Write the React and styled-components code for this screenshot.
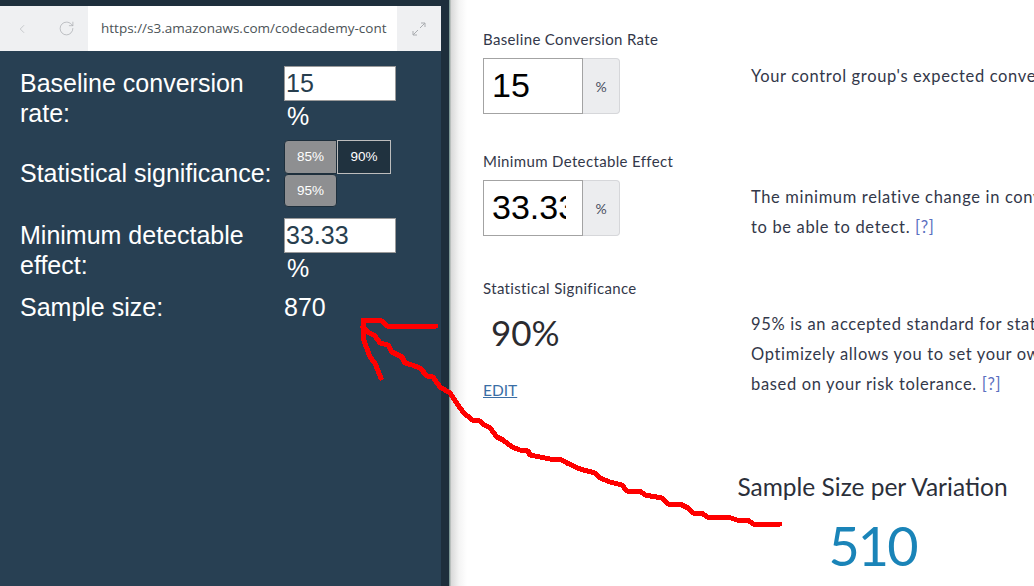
import React from 'react';
import styled, { createGlobalStyle } from 'styled-components';
import { ChevronLeft, RotateCw } from 'lucide-react';

const GlobalStyle = createGlobalStyle`
  html, body {
    margin: 0;
    padding: 0;
    background: #ffffff;
  }
  * {
    box-sizing: border-box;
  }
`;

const mainLine =
  '780,524 753,524 748,520 737,520 728,517 707,517 702,513 693,513 688,508 680,504 668,504 662,498 645,495 640,491 627,491 622,485 610,482 600,478 595,473 580,469 567,463 560,459 550,459 530,455 528,451 520,450 512,447 503,440 497,437 490,428 483,424 480,421 472,420 463,412 458,405 450,393 440,387 433,377 427,376 420,368 412,365 405,363 402,357 392,352 388,345 380,343 375,336 368,332 363,327';
const headLine =
  '436,326 387,326 382,321 363,320 363,338 370,357 375,363 381,378';

const App = () => {
  return (
    <Page>
      <GlobalStyle />
      <Preview>
        <Toolbar>
          <NavButton>
            <ChevronLeft size={14} strokeWidth={1} />
          </NavButton>
          <NavButton>
            <RotateCw size={17} strokeWidth={1} />
          </NavButton>
          <UrlBox>https://s3.amazonaws.com/codecademy-content/</UrlBox>
          <ExpandButton>
            <svg width="14" height="14" viewBox="0 0 14 14" fill="none" stroke="#a9acb0" strokeWidth="1">
              <path d="M8 6 L13 1 M9 1 H13 V5 M6 8 L1 13 M1 9 V13 H5" />
            </svg>
          </ExpandButton>
        </Toolbar>
        <Calculator>
          <CalcLabel>Baseline conversion rate:</CalcLabel>
          <CalcField>
            <CalcInput defaultValue="15" />
            <Unit>%</Unit>
          </CalcField>
          <CalcLabel $lift={2}>Statistical significance:</CalcLabel>
          <ButtonSet>
            <Choice $first>85%</Choice>
            <Choice $active>90%</Choice>
            <Choice $wrapped>95%</Choice>
          </ButtonSet>
          <CalcLabel>Minimum detectable effect:</CalcLabel>
          <CalcField>
            <CalcInput defaultValue="33.33" />
            <Unit>%</Unit>
          </CalcField>
          <CalcLabel $lift={4}>Sample size:</CalcLabel>
          <CalcLabel $lift={4}>870</CalcLabel>
        </Calculator>
      </Preview>
      <Divider />
      <Article>
        <Setting $height={122}>
          <FieldColumn>
            <FieldLabel>Baseline Conversion Rate</FieldLabel>
            <InputGroup>
              <BigInput defaultValue="15" />
              <Addon>%</Addon>
            </InputGroup>
          </FieldColumn>
          <Description $top={31}>
            Your control group's expected conversion rate. [?]
          </Description>
        </Setting>
        <Setting $height={127}>
          <FieldColumn>
            <FieldLabel>Minimum Detectable Effect</FieldLabel>
            <InputGroup>
              <BigInput defaultValue="33.33" />
              <Addon>%</Addon>
            </InputGroup>
          </FieldColumn>
          <Description $top={30}>
            The minimum relative change in conversion rate you would like
            <br />
            to be able to detect. <Help>[?]</Help>
          </Description>
        </Setting>
        <Setting $height={128}>
          <FieldColumn>
            <FieldLabel>Statistical Significance</FieldLabel>
            <BigValue>90%</BigValue>
            <EditLink>EDIT</EditLink>
          </FieldColumn>
          <Description $top={30}>
            95% is an accepted standard for statistical significance, although
            <br />
            Optimizely allows you to set your own threshold for significance
            <br />
            based on your risk tolerance. <Help>[?]</Help>
          </Description>
        </Setting>
        <Result>
          <ResultTitle>Sample Size per Variation</ResultTitle>
          <ResultValue>510</ResultValue>
        </Result>
      </Article>
      <Scribble viewBox="0 0 1034 586" fill="none" stroke="#fe0000" strokeWidth="5" strokeLinejoin="round" strokeLinecap="round" shapeRendering="crispEdges">
        <polyline points={mainLine} />
        <polyline points={headLine} />
      </Scribble>
    </Page>
  );
};

export default App;

const Page = styled.div`
  position: relative;
  display: flex;
  width: 1034px;
  height: 586px;
  overflow: hidden;
  background: #ffffff;
`;
const Preview = styled.div`
  width: 441px;
  flex-shrink: 0;
  padding-top: 6px;
  background: #284053;
  box-shadow: inset 0 6px 0 #1e2f3c;
  font-family: 'Liberation Sans', Arial, sans-serif;
`;
const Toolbar = styled.div`
  display: flex;
  align-items: center;
  height: 45px;
  background: #eff0f2;
`;
const NavButton = styled.div`
  display: flex;
  justify-content: center;
  align-items: center;
  width: 44px;
  height: 100%;
  color: #a9acb0;
`;
const UrlBox = styled.div`
  width: 309px;
  height: 100%;
  padding-left: 13px;
  overflow: hidden;
  border-right: 10px solid #ffffff;
  background: #ffffff;
  color: #4c5357;
  font-family: 'Open Sans', sans-serif;
  font-size: 13.5px;
  line-height: 45px;
  white-space: nowrap;
`;
const ExpandButton = styled.div`
  display: flex;
  flex: 1;
  justify-content: center;
  align-items: center;
`;
const Calculator = styled.div`
  display: grid;
  grid-template-columns: 264px 112px;
  row-gap: 10px;
  align-items: center;
  padding: 15px 0 0 20px;
  color: #ffffff;
  font-size: 25px;
  line-height: 30px;
`;
const CalcLabel = styled.div`
  padding-bottom: ${(p) => p.$lift || 0}px;
`;
const CalcField = styled.div`
  height: 64px;
`;
const CalcInput = styled.input`
  display: block;
  width: 112px;
  height: 35px;
  padding: 0 1px;
  border: 1px solid #9a9a9a;
  border-radius: 0;
  outline: none;
  background: #ffffff;
  color: #273e4e;
  font-family: 'Liberation Sans', Arial, sans-serif;
  font-size: 25px;
`;
const Unit = styled.div`
  padding-left: 3px;
`;
const ButtonSet = styled.div`
  display: flex;
  flex-wrap: wrap;
  align-content: flex-start;
  width: 112px;
  height: 68px;
`;
const Choice = styled.div`
  display: flex;
  justify-content: center;
  align-items: center;
  width: ${(p) => (p.$active ? '54px' : '53px')};
  height: ${(p) => (p.$wrapped ? '33px' : '34px')};
  border: 1px solid ${(p) => (p.$active ? '#bdbdbd' : '#1e2f3c')};
  border-radius: ${(p) => (p.$first ? '4px 0 0 4px' : p.$wrapped ? '4px' : '0')};
  background: ${(p) => (p.$active ? '#20323f' : '#8e8f91')};
  color: #ffffff;
  font-size: 13.5px;
  line-height: 1;
`;
const Divider = styled.div`
  width: 10px;
  flex-shrink: 0;
  background: linear-gradient(to right, #1e2f3c 0, #1e2f3c 8px, #7f9a96 8px, #7f9a96 9px, #b9bfbd 9px);
`;
const Article = styled.div`
  flex: 1;
  min-width: 0;
  padding: 30px 0 0 32px;
  overflow: hidden;
  background: linear-gradient(to right, #d9d9d9 0, #f4f4f4 8px, #ffffff 16px);
  color: #2b2f3a;
  font-family: Lato, 'Open Sans', sans-serif;
`;
const Setting = styled.div`
  display: flex;
  height: ${(p) => p.$height}px;
`;
const FieldColumn = styled.div`
  display: flex;
  flex-direction: column;
  align-items: flex-start;
  width: 268px;
  flex-shrink: 0;
`;
const FieldLabel = styled.div`
  height: 28px;
  color: #33384a;
  font-size: 15px;
  line-height: 18px;
  letter-spacing: 0.35px;
`;
const InputGroup = styled.div`
  display: flex;
  height: 56px;
`;
const BigInput = styled.input`
  width: 100px;
  height: 56px;
  padding: 0 16px 2px 8px;
  border: 1px solid #a3a3a3;
  border-radius: 0;
  outline: none;
  background: #ffffff;
  color: #000000;
  font-family: 'Liberation Sans', Arial, sans-serif;
  font-size: 34px;
`;
const Addon = styled.div`
  display: flex;
  justify-content: center;
  align-items: center;
  width: 37px;
  border: 1px solid #d6d7da;
  border-left: 0;
  border-radius: 0 4px 4px 0;
  background: #ecedef;
  color: #4a4f60;
  font-size: 14px;
`;
const BigValue = styled.div`
  padding: 3px 0 0 8px;
  color: #2b2b2f;
  font-size: 35px;
  line-height: 44px;
`;
const EditLink = styled.a`
  margin-top: 26px;
  color: #3a6ea5;
  font-size: 15.5px;
  line-height: 20px;
  text-decoration: underline;
`;
const Description = styled.div`
  margin-top: ${(p) => p.$top}px;
  color: #33384a;
  font-size: 16.5px;
  line-height: 30px;
  letter-spacing: 0.65px;
  white-space: nowrap;
`;
const Help = styled.span`
  color: #5a6fc0;
`;
const Result = styled.div`
  display: flex;
  flex-direction: column;
  align-items: center;
  width: 271px;
  margin: 66px 0 0 254px;
`;
const ResultTitle = styled.div`
  color: #2b2f3a;
  font-size: 24.5px;
  line-height: 28px;
  white-space: nowrap;
`;
const ResultValue = styled.div`
  margin-top: 14px;
  color: #1a84b8;
  font-size: 54px;
  letter-spacing: -2px;
  line-height: 62px;
`;
const Scribble = styled.svg`
  position: absolute;
  top: 0;
  left: 0;
  width: 1034px;
  height: 586px;
  pointer-events: none;
`;
